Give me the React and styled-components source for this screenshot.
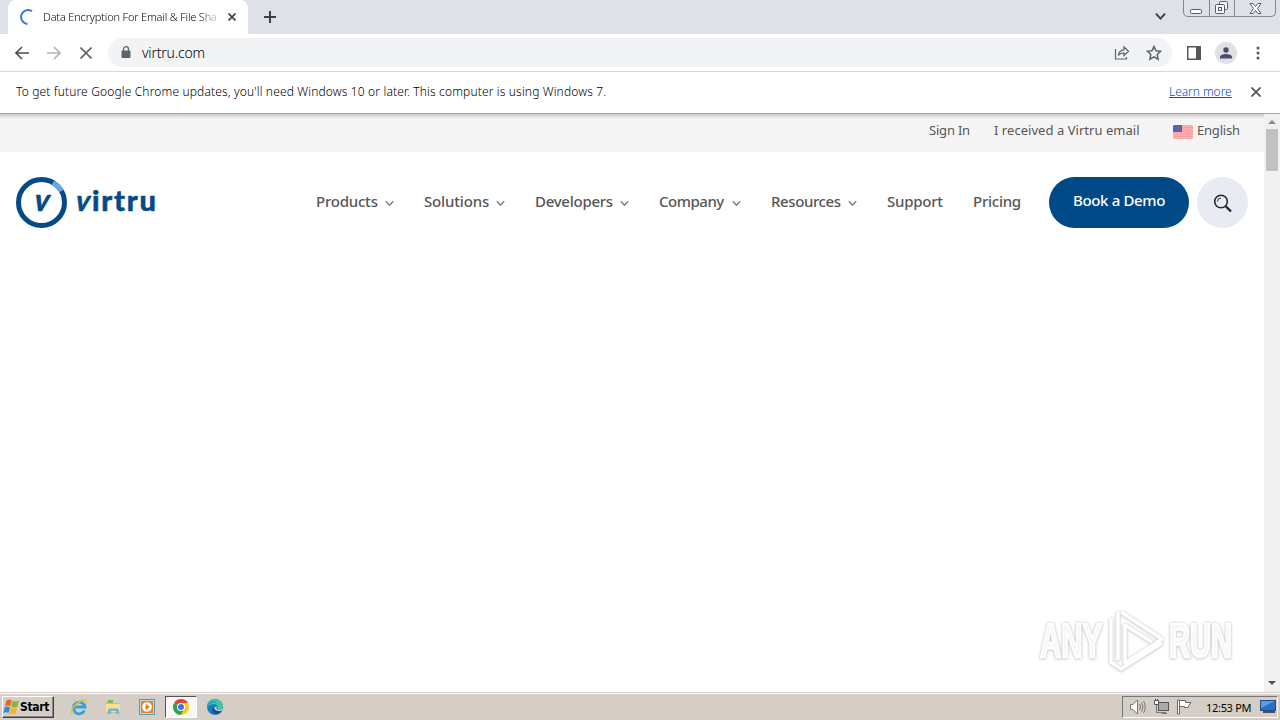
import React from 'react';
import styled, { createGlobalStyle } from 'styled-components';

const NAV_ITEMS = [
	{ label: 'Products', width: 108, spacing: -0.22, hasMenu: true },
	{ label: 'Solutions', width: 111, spacing: -0.17, hasMenu: true },
	{ label: 'Developers', width: 124, spacing: -0.27, hasMenu: true },
	{ label: 'Company', width: 112, spacing: -0.48, hasMenu: true },
	{ label: 'Resources', width: 116, spacing: -0.4, hasMenu: true },
	{ label: 'Support', width: 86, spacing: -0.25 },
	{ label: 'Pricing', width: 76, spacing: -0.25 },
];

const App = () => (
	<Screen>
		<GlobalStyle/>
		<TabStrip/>
		<Toolbar/>
		<InfoBar>
			<InfoText>To get future Google Chrome updates, you'll need Windows 10 or later. This computer is using Windows 7.</InfoText>
			<LearnMore>Learn more</LearnMore>
			<CrossIcon size={10} color='#55585c' weight={1.8}/>
		</InfoBar>
		<Viewport>
			<Page>
				<TopBar>
					<TopLink width={65} spacing={-0.2}>Sign In</TopLink>
					<TopLink width={179} spacing={0.04}>I received a Virtru email</TopLink>
					<FlagIcon/>
					<TopLink width={67} spacing={-0.2}>English</TopLink>
				</TopBar>
				<Header>
					<VirtruLogo/>
					<Nav>
						{NAV_ITEMS.map((item) => (
							<NavItem key={item.label} width={item.width}>
								<NavLabel spacing={item.spacing}>{item.label}</NavLabel>
								{item.hasMenu && <Chevron size={9} color='#808080'/>}
							</NavItem>
						))}
					</Nav>
					<DemoButton>Book a Demo</DemoButton>
					<SearchButton><SearchIcon/></SearchButton>
				</Header>
			</Page>
			<ScrollBar>
				<Arrow direction='up'/>
				<Thumb/>
				<Arrow/>
			</ScrollBar>
			<Watermark/>
		</Viewport>
		<Taskbar/>
	</Screen>
);

export default App;

const TabStrip = () => (
	<TabStripStyled>
		<Tab>
			<svg width='16' height='16' viewBox='0 0 16 16' fill='none'>
				<path d='M13 2.200A7 7 0 1 0 8.500 15' stroke='#3b76d0' strokeWidth='2'/>
			</svg>
			<TabTitle>Data Encryption For Email &amp; File Sha</TabTitle>
			<CrossIcon size={8} color='#3c4043' weight={1.6}/>
		</Tab>
		<NewTab>
			<svg width='12' height='12' viewBox='0 0 12 12'>
				<path d='M6 0v12M0 6h12' stroke='#3c4043' strokeWidth='2'/>
			</svg>
		</NewTab>
		<TabSearch><Chevron size={11} color='#3c4043' weight={1.6}/></TabSearch>
		<WindowControls>
			<Control width={25}>
				<svg width='13' height='5'><rect x='.5' y='.5' width='11' height='4' rx='1' fill='#fff' stroke='#555d68'/></svg>
			</Control>
			<Control width={25}>
				<svg width='14' height='13' fill='#f5f6f8' stroke='#555d68'>
					<rect x='4.5' y='.5' width='8' height='8' rx='1'/>
					<rect x='.5' y='3.5' width='9' height='9' rx='1'/>
					<rect x='3.5' y='6.5' width='3' height='3'/>
				</svg>
			</Control>
			<Control width={41}>
				<svg width='13' height='11' viewBox='0 0 13 11'>
					<path d='M1 .5h3l2.500 3 2.500-3h3L8.500 5.500l3.500 5H9l-2.500-3-2.500 3H1l3.500-5z' fill='#fff' stroke='#555d68'/>
				</svg>
			</Control>
		</WindowControls>
	</TabStripStyled>
);

const Toolbar = () => (
	<ToolbarStyled>
		<ToolSlot width={32}><BackArrow color='#4b4e52'/></ToolSlot>
		<ToolSlot width={32}><BackArrow color='#b2b4b7' flipped/></ToolSlot>
		<ToolSlot width={32}><CrossIcon size={12} color='#5f6368' weight={1.6}/></ToolSlot>
		<AddressBar>
			<svg width='10' height='13' viewBox='0 0 10 13'>
				<rect x='.5' y='4.5' width='9' height='7.5' rx='1' fill='#5f6368'/>
				<path d='M2.500 5V3.200a2.500 2.500 0 0 1 5 0V5' fill='none' stroke='#5f6368' strokeWidth='1.300'/>
			</svg>
			<Url>virtru.com</Url>
			<svg width='16' height='16' viewBox='0 0 16 16' fill='none' stroke='#5f6368' strokeWidth='1.2'>
				<path d='M1.500 4v10h11V12'/>
				<path d='M4.300 10.500c.6-3.800 2.400-5.500 5.700-5.700V2l4.500 4.300-4.500 4.200V7.900c-2.500 0-4.300.8-5.700 2.600z'/>
			</svg>
			<svg width='16' height='16' viewBox='0 0 16 16'>
				<path d='M8 1.500l2 4.300 4.600.5-3.400 3.200.9 4.700L8 11.900l-4.100 2.300.9-4.700L1.400 6.300 6 5.800z' fill='none' stroke='#5f6368' strokeWidth='1.500'/>
			</svg>
		</AddressBar>
		<ToolSlot width={44}>
			<svg width='14' height='14'>
				<rect x='.75' y='.75' width='12.500' height='12.500' fill='none' stroke='#55585d' strokeWidth='1.500'/>
				<rect x='9' width='5' height='14' fill='#55585d'/>
			</svg>
		</ToolSlot>
		<Avatar>
			<svg width='12' height='12' viewBox='0 0 12 12' fill='#4a5068'>
				<circle cx='6' cy='3' r='2.700'/>
				<path d='M0 11.500V10c0-2 3-3 6-3s6 1 6 3v1.500z'/>
			</svg>
		</Avatar>
		<ToolSlot width={43}>
			<svg width='4' height='14' fill='#55585d'>
				<circle cx='2' cy='2' r='1.500'/><circle cx='2' cy='7' r='1.500'/><circle cx='2' cy='12' r='1.500'/>
			</svg>
		</ToolSlot>
	</ToolbarStyled>
);

const Taskbar = () => (
	<TaskbarStyled>
		<StartButton>
			<svg width='17' height='16' viewBox='0 0 17 16'>
				<path d='M3.500 1.500c2-1.300 3.500-1.200 5.200-.2L7.300 7.200c-1.700-1-3.300-1-5.300.2z' fill='#e6652b'/>
				<path d='M9.500 1.800c2 1 3.700 1 6.500-.3L14.500 7.500c-2.500 1.200-4 1.100-6.200.1z' fill='#83b83a'/>
				<path d='M1.700 8.300c2-1.200 3.600-1.200 5.300-.1L5.600 14c-1.800-1-3.500-1-5.400.2z' fill='#3c87cd'/>
				<path d='M7.900 8.500c2 1 3.700 1 6.300-.1L12.700 14.300c-2.500 1.200-4.200 1.200-6.300.1z' fill='#f4b72c'/>
			</svg>
			Start
		</StartButton>
		<QuickLaunch>
			<TaskSlot>
				<svg width='18' height='18' viewBox='0 0 18 18' fill='none'>
					<path d='M14.500 12.500A5.800 5.800 0 1 1 15 9H5' stroke='#36a1df' strokeWidth='2.800'/>
					<path d='M2.500 15.800C-.5 14 4 6 10.500 3c4-1.900 6.600-1.600 5.500 1.500' stroke='#edbd35' strokeWidth='1.400'/>
				</svg>
			</TaskSlot>
			<TaskSlot>
				<svg width='17' height='16' viewBox='0 0 17 16'>
					<path d='M1 2h6l1 2h7v10H1z' fill='#e5bd56'/>
					<path d='M3 1h5v3H3z' fill='#80b85d'/>
					<path d='M1 5h14v8H1z' fill='#f8df91'/>
					<path d='M3 15v-4q0-1.500 1.500-1.500h8q1.500 0 1.500 1.500v4h-3v-3H6v3z' fill='#70b5dc'/>
				</svg>
			</TaskSlot>
			<TaskSlot>
				<svg width='16' height='16' viewBox='0 0 16 16'>
					<rect x='.5' y='.5' width='15' height='15' fill='#b9dcf1' stroke='#559abf'/>
					<rect x='2' y='2' width='12' height='12' fill='#ef8219'/>
					<circle cx='8' cy='8' r='4.800' fill='#fff'/>
					<path d='M6.500 5l4.500 3-4.500 3z' fill='#ef7712'/>
				</svg>
			</TaskSlot>
			<TaskSlot active>
				<svg width='16' height='16' viewBox='0 0 16 16'>
					<path d='M8 8L1.070 4A8 8 0 0 1 14.930 4z' fill='#df4434'/>
					<path d='M8 8L1.070 4A8 8 0 0 0 8 16L11.500 10z' fill='#30a052'/>
					<path d='M8 8V4H14.930A8 8 0 0 1 8 16L11.500 10z' fill='#fbcb25'/>
					<circle cx='8' cy='8' r='4' fill='#fff'/>
					<circle cx='8' cy='8' r='3' fill='#3b77df'/>
				</svg>
			</TaskSlot>
			<TaskSlot>
				<svg width='16' height='16' viewBox='0 0 16 16'>
					<circle cx='8' cy='8' r='8' fill='#1679c4'/>
					<path d='M.3 6C1.800-2 15-1.500 16 7c.2 3-3 4-6 3.200 1.500-2 .6-4.700-2.500-4.900C4 5 1.300 6.500.3 9z' fill='#45c6a0'/>
					<path d='M.3 6C2 1 8 0 11 4.500 7 2.500 1.800 4.500.3 9z' fill='#279fd2'/>
					<path d='M7 8c-.5 3 3 5 7.700 3.600C13 15 9 16 6.500 13.500 5 12 5.500 9 7 8z' fill='#164c88'/>
					<path d='M9.500 7.500c.8 1-.5 2 .3 2.700 2 1 4 .5 6.200-.6l-1.300 2c-4 1.500-7.500-.5-7.500-3z' fill='#d5cec6'/>
				</svg>
			</TaskSlot>
		</QuickLaunch>
		<Tray>
			<svg width='18' height='16' viewBox='0 0 18 16' fill='#fff' stroke='#777' strokeWidth='1'>
				<path d='M1.500 5.500h2.500L8.500 1v14L4 10.500H1.500z'/>
				<path d='M10.500 5q2 3 0 6M12.500 3.500q3 4.500 0 9M14.500 2q3.500 6 0 12' fill='none'/>
			</svg>
			<svg width='17' height='16' viewBox='0 0 17 16' fill='#fff' stroke='#555'>
				<rect x='5.500' y='3.500' width='10' height='8' fill='#aaa'/>
				<path d='M3.500 6v7.500H13M9 14.500h5' fill='none' stroke='#777'/>
				<path d='M1.500 1.500h4v4h-4zM2.500 0v2M4.500 0v2'/>
			</svg>
			<svg width='17' height='16' viewBox='0 0 17 16' fill='#fff' stroke='#666'>
				<path d='M1.500 1h2v14h-2zM3.500 1.500h6v2h5.500l-2 2.500 -1 2.500h-3.500V7.500h-5z'/>
			</svg>
			<Clock>12:53 PM</Clock>
			<svg width='16' height='14' viewBox='0 0 16 14'>
				<rect x='.5' y='.5' width='15' height='10' fill='#2a6fc5' stroke='#234c83'/>
				<path d='M1 1h14L1 8z' fill='#5b9de2'/>
				<path d='M3 11h12v2H3z' fill='#435469'/>
			</svg>
		</Tray>
	</TaskbarStyled>
);

const VirtruLogo = () => (
	<LogoStyled width='144' height='52' viewBox='0 0 144 52'>
		<circle cx='25.500' cy='25.500' r='23' fill='none' stroke='#044a87' strokeWidth='5'/>
		<path d='M37 5.600A23 23 0 0 1 45.400 14' fill='none' stroke='#69a5df' strokeWidth='5'/>
		<g fill='#044a87' stroke='#044a87' strokeLinejoin='round' strokeWidth='.5' fontFamily='Lato, sans-serif' fontWeight='900'>
			<text transform='translate(16.500 34) skewX(-13)' fontSize='31' textLength='15' lengthAdjust='spacingAndGlyphs'>v</text>
			<text transform='translate(58 33.500) skewX(-13)' fontSize='29' textLength='14' lengthAdjust='spacingAndGlyphs'>v</text>
			<text x='76' y='33.500' fontSize='29' textLength='64' lengthAdjust='spacing'>irtru</text>
		</g>
	</LogoStyled>
);

const Watermark = () => (
	<WatermarkStyled width='248' height='76' viewBox='0 0 248 76'>
		<g fill='#f7f7f7' stroke='#fff' strokeWidth='2.500' fontFamily='"Liberation Sans", sans-serif' fontWeight='700' fontSize='48'>
			<text x='8' y='51' textLength='62' lengthAdjust='spacingAndGlyphs'>ANY</text>
			<text x='137' y='51' textLength='63' lengthAdjust='spacingAndGlyphs'>RUN</text>
		</g>
		<g fill='none' stroke='#fff' strokeWidth='3.500' strokeLinejoin='round'>
			<path d='M89 6l41 27-37 24V19l27 17'/>
			<path d='M86 6v48M79 12v44l10 7 41-26'/>
		</g>
	</WatermarkStyled>
);

const SearchIcon = () => (
	<svg width='20' height='20' viewBox='0 0 20 20' fill='none' stroke='#25282d'>
		<circle cx='8' cy='8.500' r='6.300' strokeWidth='1.600'/>
		<path d='M4.500 8.500A3.500 3.500 0 0 1 8 5' strokeWidth='1'/>
		<path d='M12.500 13l5.500 5.500' strokeWidth='2.400'/>
	</svg>
);

const FlagIcon = () => (
	<FlagStyled width='20' height='14' viewBox='0 0 20 14'>
		<rect width='20' height='14' rx='1.500' fill='#ffaaab'/>
		<path d='M0 2.500h20M0 5.500h20M0 8.500h20M0 11.500h20' stroke='#ffa0a2' strokeWidth='1'/>
		<path d='M0 1.500Q0 0 1.500 0H9v7H0z' fill='#5c5da9'/>
		<path d='M1 2h7M1 5h7' stroke='#7475b6' strokeDasharray='1 1'/>
	</FlagStyled>
);

const CrossIcon = ({ size, color, weight }) => (
	<svg width={size} height={size} viewBox={`0 0 ${size} ${size}`}>
		<path d={`M.5 .5L${size - 0.5} ${size - 0.5}M${size - 0.5} .5L.5 ${size - 0.5}`} stroke={color} strokeWidth={weight}/>
	</svg>
);

const Chevron = ({ size, color, weight = 1.5 }) => (
	<svg width={size} height={size - 2} viewBox='0 0 9 7' fill='none'>
		<path d='M.8 1.200l3.700 4L8.200 1.200' stroke={color} strokeWidth={weight}/>
	</svg>
);

const BackArrow = ({ color, flipped }) => (
	<svg width='14' height='14' viewBox='0 0 14 14' fill='none'>
		<path d={flipped ? 'M0 7h13M7 1l6 6-6 6' : 'M14 7H1M7 1L1 7l6 6'} stroke={color} strokeWidth='1.600'/>
	</svg>
);

const GlobalStyle = createGlobalStyle`
	body {
		margin: 0;
		overflow: hidden;
		background: #fff;
	}
	* {
		box-sizing: border-box;
	}
	svg {
		display: block;
		flex-shrink: 0;
	}
`;

const Screen = styled.div`
	width: 1280px;
	height: 720px;
	display: flex;
	flex-direction: column;
	font-family: 'Noto Sans', sans-serif;
	white-space: nowrap;
`;

const TabStripStyled = styled.div`
	height: 34px;
	display: flex;
	align-items: flex-start;
	padding-left: 8px;
	background: #dee1e8;
`;

const Tab = styled.div`
	width: 240px;
	height: 34px;
	display: flex;
	align-items: center;
	padding: 0 12px 0 11px;
	border-radius: 8px 8px 0 0;
	background: #fff;
`;

const TabTitle = styled.div`
	width: 177px;
	margin: -2px 8px 0 8px;
	font-size: 11px;
	font-weight: 350;
	letter-spacing: -0.18px;
	color: #000;
	mask-image: linear-gradient(to right, #000 155px, transparent 180px);
`;

const NewTab = styled.div`
	padding: 11px 16px;
`;

const TabSearch = styled.div`
	margin-left: auto;
	padding: 12px 17px 0 0;
`;

const WindowControls = styled.div`
	width: 93px;
	height: 17px;
	display: flex;
	margin-right: 4px;
	border: 1px solid #83878e;
	border-top: 0;
	border-radius: 0 0 5px 5px;
`;

const Control = styled.div`
	width: ${({ width }) => width}px;
	display: flex;
	align-items: flex-end;
	justify-content: center;
	padding-bottom: 2px;
	& + & {
		border-left: 1px solid #83878e;
	}
`;

const ToolbarStyled = styled.div`
	height: 38px;
	display: flex;
	align-items: center;
	padding-left: 6px;
	border-bottom: 1px solid #d5d7da;
	background: #fff;
`;

const ToolSlot = styled.div`
	width: ${({ width }) => width}px;
	display: flex;
	justify-content: center;
`;

const AddressBar = styled.div`
	width: 1064px;
	height: 29px;
	display: flex;
	align-items: center;
	margin-left: 6px;
	padding: 0 10px 0 13px;
	border-radius: 15px;
	background: #f1f3f4;
	svg + svg {
		margin-left: 16px;
	}
`;

const Url = styled.div`
	flex: 1;
	margin-left: 11px;
	font-size: 14px;
	font-weight: 350;
	letter-spacing: -0.2px;
	color: #000;
`;

const Avatar = styled.div`
	width: 22px;
	height: 22px;
	display: flex;
	align-items: center;
	justify-content: center;
	margin: 0 -1px;
	border-radius: 50%;
	background: #dfe1e5;
`;

const InfoBar = styled.div`
	height: 42px;
	display: flex;
	align-items: center;
	padding: 0 19px 1px 16px;
	border-bottom: 1px solid #a5a5a5;
	font-size: 12px;
	font-weight: 350;
	color: #000;
`;

const InfoText = styled.div`
	flex: 1;
	margin-top: -2px;
	letter-spacing: 0.147px;
`;

const LearnMore = styled.a`
	width: 63px;
	margin: -2px 19px 0 0;
	letter-spacing: -0.05px;
	color: #0050c0;
	text-decoration: underline;
`;

const Viewport = styled.div`
	position: relative;
	height: 578px;
	display: flex;
`;

const Page = styled.div`
	width: 1264px;
`;

const TopBar = styled.div`
	height: 38px;
	display: flex;
	justify-content: flex-end;
	background: linear-gradient(#c8c8c8 0, #dcdcdc 2px, #f5f5f5 5px);
`;

const TopLink = styled.div`
	width: ${({ width }) => width}px;
	padding-top: 7px;
	font-size: 13px;
	line-height: 19px;
	letter-spacing: ${({ spacing }) => spacing}px;
	color: #555;
`;

const FlagStyled = styled.svg`
	margin: 11px 4px 0 0;
`;

const Header = styled.div`
	height: 101px;
	display: flex;
	align-items: center;
	padding: 0 16px;
`;

const LogoStyled = styled.svg`
	margin-right: 156px;
`;

const Nav = styled.div`
	display: flex;
	align-items: center;
`;

const NavItem = styled.div`
	width: ${({ width }) => width}px;
	height: 24px;
	display: flex;
	align-items: center;
	svg {
		margin: 1px 30px 0 auto;
	}
`;

const NavLabel = styled.span`
	padding-bottom: 4px;
	font-size: 15px;
	font-weight: 500;
	line-height: 22px;
	letter-spacing: ${({ spacing }) => spacing}px;
	color: #565656;
`;

const DemoButton = styled.button`
	width: 140px;
	height: 51px;
	flex-shrink: 0;
	padding: 0 0 5px;
	border: 0;
	border-radius: 26px;
	background: #004987;
	color: #fff;
	font: 500 15px 'Noto Sans', sans-serif;
	letter-spacing: -0.35px;
`;

const SearchButton = styled.div`
	width: 51px;
	height: 51px;
	flex-shrink: 0;
	display: flex;
	align-items: center;
	justify-content: center;
	margin-left: 8px;
	border-radius: 50%;
	background: #e8ebf2;
`;

const ScrollBar = styled.div`
	width: 16px;
	display: flex;
	flex-direction: column;
	align-items: center;
	padding: 6px 0 7px;
	background: #f1f1f1;
`;

const Arrow = styled.div`
	border: 4px solid transparent;
	${({ direction }) => direction === 'up'
		? 'border-top: 0; border-bottom-color: #8b8b8b;'
		: 'border-bottom: 0; border-top-color: #505050; margin-top: auto;'}
`;

const Thumb = styled.div`
	width: 12px;
	height: 42px;
	margin-top: 5px;
	background: #c1c1c1;
`;

const WatermarkStyled = styled.svg`
	position: absolute;
	left: 1032px;
	top: 492px;
	filter: drop-shadow(0 0 1px #c8c8c8) drop-shadow(0 1px 1px #ddd);
`;

const TaskbarStyled = styled.div`
	height: 28px;
	display: flex;
	align-items: center;
	padding: 1px 2px 0;
	border-top: 1px solid #d5cec6;
	box-shadow: inset 0 1px #fff;
	background: #d5cec6;
`;

const StartButton = styled.div`
	width: 52px;
	height: 22px;
	display: flex;
	align-items: center;
	border: 1px solid;
	border-color: #fff #404040 #404040 #fff;
	box-shadow: inset -1px -1px #888;
	font: bold 12px 'DejaVu Sans Condensed', 'DejaVu Sans', sans-serif;
	letter-spacing: -0.35px;
	color: #000;
`;

const QuickLaunch = styled.div`
	display: flex;
	gap: 2px;
	margin-left: 9px;
`;

const TaskSlot = styled.div`
	width: 32px;
	height: 22px;
	display: flex;
	align-items: center;
	justify-content: center;
	border: 1px solid;
	border-color: ${({ active }) => active ? '#555 #fff #fff #555' : 'transparent'};
	background: ${({ active }) => active ? '#f8f7f5' : 'transparent'};
`;

const Tray = styled.div`
	width: 156px;
	height: 22px;
	display: flex;
	align-items: center;
	gap: 6px;
	margin-left: auto;
	padding-left: 6px;
	border: 1px solid;
	border-color: #777 #fff #fff #777;
`;

const Clock = styled.div`
	width: 47px;
	margin-left: 7px;
	margin-right: 1px;
	font: 11px 'Noto Sans', sans-serif;
	letter-spacing: -0.3px;
	color: #000;
`;
